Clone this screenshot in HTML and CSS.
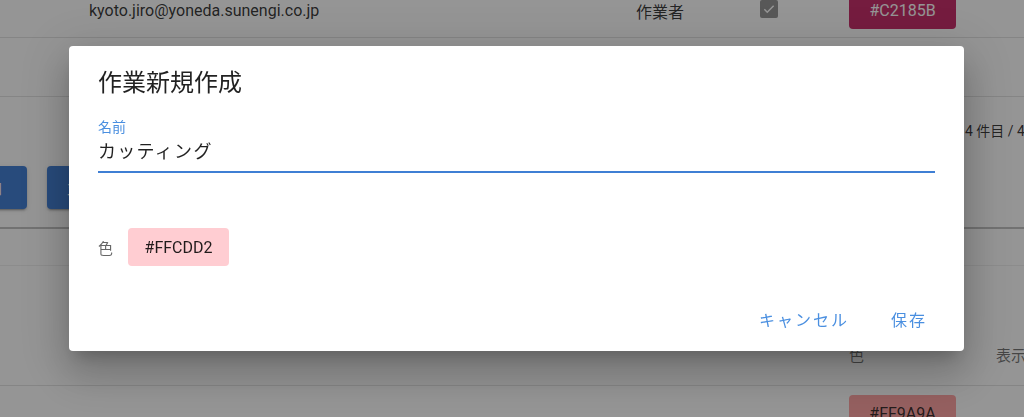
FILE: index.html
```html
<!DOCTYPE html>
<html lang="ja">
<head>
    <meta charset="UTF-8">
    <meta name="viewport" content="width=device-width, initial-scale=1.0">
    <title>作業一覧</title>
    <link rel="stylesheet" href="styles.css">
</head>
<body>
    <div class="page">
        <div class="row row-user">
            <div class="cell cell-name">kyoto.jiro@yoneda.sunengi.co.jp</div>
            <div class="cell cell-role">作業者</div>
            <div class="cell cell-check">
                <span class="checkbox">
                    <svg viewBox="0 0 24 24" width="14" height="14"><path d="M4 12.5l5 5L20 6.5" fill="none" stroke="#fff" stroke-width="2.6"/></svg>
                </span>
            </div>
            <div class="cell cell-color"><span class="chip chip-dark" style="background-color: #C2185B;">#C2185B</span></div>
        </div>
        <div class="row row-empty"></div>

        <div class="toolbar">
            <div class="pager">4 件目 / 4</div>
            <div class="toolbar-buttons">
                <button class="btn">追加</button>
                <button class="btn">並び替え</button>
            </div>
        </div>

        <div class="subbar"></div>

        <div class="row row-head">
            <div class="cell cell-name"></div>
            <div class="cell cell-role"></div>
            <div class="cell cell-check"></div>
            <div class="cell cell-color">色</div>
            <div class="cell cell-show">表示</div>
        </div>
        <div class="row row-work">
            <div class="cell cell-name"></div>
            <div class="cell cell-role"></div>
            <div class="cell cell-check"></div>
            <div class="cell cell-color"><span class="chip" style="background-color: #FF9A9A;">#FF9A9A</span></div>
        </div>
    </div>

    <div class="overlay"></div>

    <div class="dialog">
        <div class="dialog-title">作業新規作成</div>
        <div class="field">
            <label class="field-label">名前</label>
            <div class="field-input">カッティング</div>
        </div>
        <div class="color-row">
            <span class="color-label">色</span>
            <span class="chip chip-pick" style="background-color: #FFCDD2;">#FFCDD2</span>
        </div>
        <div class="dialog-actions">
            <button class="text-btn">キャンセル</button>
            <button class="text-btn">保存</button>
        </div>
    </div>
</body>
</html>
```

FILE: styles.css
```css
body {
    margin: 0;
    font-family: Roboto, "Noto Sans CJK JP", sans-serif;
    background-color: #fff;
    color: rgba(0, 0, 0, 0.87);
    overflow: hidden;
}
.page {
    margin-top: -16px;
}
.row {
    display: flex;
    align-items: center;
    border-bottom: 1px solid #e0e0e0;
    font-size: 16px;
    white-space: nowrap;
}
.cell {
    flex-shrink: 0;
}
.cell-name {
    width: 547px;
    padding-left: 89px;
}
.cell-role {
    width: 124px;
}
.cell-check {
    width: 89px;
}
.cell-color {
    width: 147px;
}
.row-user {
    height: 53px;
}
.row-empty {
    height: 58px;
}
.checkbox {
    display: flex;
    align-items: center;
    justify-content: center;
    width: 18px;
    height: 18px;
    border-radius: 2px;
    background-color: #8a8a8a;
    margin-top: -3px;
}
.chip {
    display: inline-flex;
    align-items: center;
    justify-content: center;
    height: 36px;
    width: 107px;
    border-radius: 4px;
    font-size: 16px;
}
.chip-dark {
    color: #fff;
}
.toolbar {
    height: 130px;
    border-bottom: 2px solid #bdbdbd;
}
.pager {
    padding: 24px 0 0 965px;
    font-size: 14px;
    line-height: 20px;
    white-space: nowrap;
}
.toolbar-buttons {
    display: flex;
    gap: 20px;
    margin: 25px 0 0 -53px;
}
.btn {
    height: 43px;
    padding: 0 20px;
    border: none;
    border-radius: 4px;
    background-color: #2f72d0;
    color: #fff;
    font-family: inherit;
    font-size: 15px;
    min-width: 80px;
    box-shadow: 0 3px 1px -2px rgba(0,0,0,.2), 0 2px 2px 0 rgba(0,0,0,.14), 0 1px 5px 0 rgba(0,0,0,.12);
}
.subbar {
    height: 36px;
    border-bottom: 1px solid #eeeeee;
}
.row-head {
    height: 119px;
    align-items: flex-end;
    font-size: 15px;
    color: rgba(0, 0, 0, 0.6);
}
.row-head .cell {
    padding-bottom: 19px;
    line-height: 20px;
}
.row-work {
    align-items: flex-start;
    padding-top: 9px;
    height: 30px;
}
.overlay {
    position: fixed;
    inset: 0;
    background-color: rgba(33, 33, 33, 0.48);
}
.dialog {
    position: fixed;
    left: 69px;
    top: 46px;
    width: 895px;
    height: 305px;
    box-sizing: border-box;
    background-color: #fff;
    border-radius: 4px;
    padding: 21px 29px 0;
    box-shadow: 0 11px 15px -7px rgba(0,0,0,.2), 0 24px 38px 3px rgba(0,0,0,.14), 0 9px 46px 8px rgba(0,0,0,.12);
}
.dialog-title {
    font-size: 24px;
    line-height: 32px;
    color: rgba(0, 0, 0, 0.87);
}
.field {
    margin-top: 20px;
    border-bottom: 2px solid #3f7fd4;
}
.field-label {
    display: block;
    font-size: 14px;
    line-height: 16px;
    color: #4a8fe0;
}
.field-input {
    margin-top: 5px;
    padding-bottom: 7px;
    font-size: 18px;
    letter-spacing: 1.3px;
    line-height: 24px;
}
.color-row {
    display: flex;
    align-items: center;
    gap: 15px;
    margin-top: 55px;
}
.color-label {
    font-size: 15px;
    color: rgba(0, 0, 0, 0.6);
}
.chip-pick {
    width: 101px;
    height: 38px;
}
.dialog-actions {
    display: flex;
    justify-content: flex-end;
    gap: 10px;
    margin: 35px -8px 0 0;
}
.text-btn {
    height: 36px;
    padding: 0 16px;
    border: none;
    background: none;
    font-family: inherit;
    font-size: 16px;
    letter-spacing: 2px;
    color: #4a8fe0;
}
```
